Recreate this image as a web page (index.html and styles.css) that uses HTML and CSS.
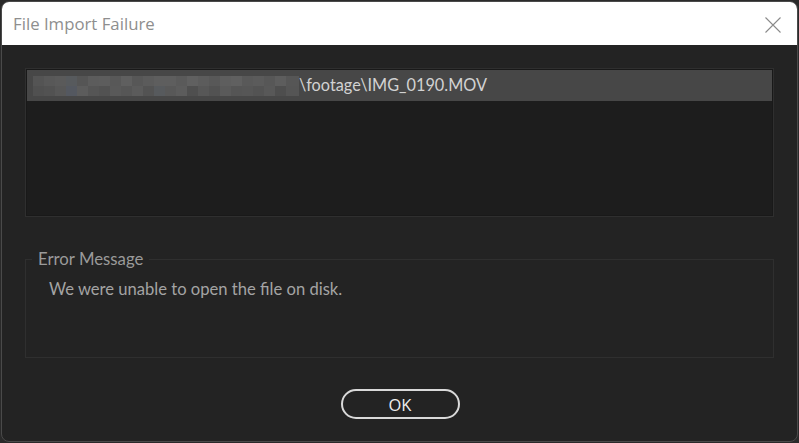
FILE: index.html
```html
<!DOCTYPE html>
<html lang="en">
<head>
<meta charset="utf-8">
<title>File Import Failure</title>
<link rel="stylesheet" href="styles.css">
</head>
<body>
<div class="window">
  <div class="titlebar">
    <span class="title">File Import Failure</span>
    <button class="close" aria-label="Close">
      <svg width="16" height="16" viewBox="0 0 16 16"><path d="M0.5 0.5 L15.5 15.5 M15.5 0.5 L0.5 15.5" stroke="#8a8a8a" stroke-width="1.1" fill="none"/></svg>
    </button>
  </div>
  <div class="content">
    <div class="list">
      <div class="row selected">
        <svg class="blur" width="266" height="20" viewBox="0 0 266 20" shape-rendering="crispEdges">
          <g>
            <rect x="0" y="0" width="11" height="10" fill="#545454"/>
            <rect x="11" y="0" width="11" height="10" fill="#585858"/>
            <rect x="22" y="0" width="11" height="10" fill="#5a5a5a"/>
            <rect x="33" y="0" width="11" height="10" fill="#575a5d"/>
            <rect x="44" y="0" width="11" height="10" fill="#555555"/>
            <rect x="55" y="0" width="11" height="10" fill="#5c5c5c"/>
            <rect x="66" y="0" width="11" height="10" fill="#5d5d5d"/>
            <rect x="77" y="0" width="11" height="10" fill="#585858"/>
            <rect x="88" y="0" width="11" height="10" fill="#5f5f5f"/>
            <rect x="99" y="0" width="11" height="10" fill="#575757"/>
            <rect x="110" y="0" width="11" height="10" fill="#5b5b5b"/>
            <rect x="121" y="0" width="11" height="10" fill="#5e5e5e"/>
            <rect x="132" y="0" width="11" height="10" fill="#5e5e5e"/>
            <rect x="143" y="0" width="11" height="10" fill="#5a5a5a"/>
            <rect x="154" y="0" width="11" height="10" fill="#606060"/>
            <rect x="165" y="0" width="11" height="10" fill="#5c5c5c"/>
            <rect x="176" y="0" width="11" height="10" fill="#585858"/>
            <rect x="187" y="0" width="11" height="10" fill="#5e5e5e"/>
            <rect x="198" y="0" width="11" height="10" fill="#606060"/>
            <rect x="209" y="0" width="11" height="10" fill="#595959"/>
            <rect x="220" y="0" width="11" height="10" fill="#5b5b5b"/>
            <rect x="231" y="0" width="11" height="10" fill="#575757"/>
            <rect x="242" y="0" width="11" height="10" fill="#5d5d5d"/>
            <rect x="253" y="0" width="13" height="10" fill="#565656"/>
            <rect x="0" y="10" width="11" height="10" fill="#505050"/>
            <rect x="11" y="10" width="11" height="10" fill="#525252"/>
            <rect x="22" y="10" width="11" height="10" fill="#575757"/>
            <rect x="33" y="10" width="11" height="10" fill="#545860"/>
            <rect x="44" y="10" width="11" height="10" fill="#5c5c5c"/>
            <rect x="55" y="10" width="11" height="10" fill="#555555"/>
            <rect x="66" y="10" width="11" height="10" fill="#525252"/>
            <rect x="77" y="10" width="11" height="10" fill="#595959"/>
            <rect x="88" y="10" width="11" height="10" fill="#565656"/>
            <rect x="99" y="10" width="11" height="10" fill="#5b5b5b"/>
            <rect x="110" y="10" width="11" height="10" fill="#535353"/>
            <rect x="121" y="10" width="11" height="10" fill="#575a5d"/>
            <rect x="132" y="10" width="11" height="10" fill="#585858"/>
            <rect x="143" y="10" width="11" height="10" fill="#5c5c5c"/>
            <rect x="154" y="10" width="11" height="10" fill="#4f4f4f"/>
            <rect x="165" y="10" width="11" height="10" fill="#575757"/>
            <rect x="176" y="10" width="11" height="10" fill="#525252"/>
            <rect x="187" y="10" width="11" height="10" fill="#5a5a5a"/>
            <rect x="198" y="10" width="11" height="10" fill="#555555"/>
            <rect x="209" y="10" width="11" height="10" fill="#565656"/>
            <rect x="220" y="10" width="11" height="10" fill="#535353"/>
            <rect x="231" y="10" width="11" height="10" fill="#585858"/>
            <rect x="242" y="10" width="11" height="10" fill="#4e4e4e"/>
            <rect x="253" y="10" width="13" height="10" fill="#555555"/>
          </g>
        </svg>
        <span class="path">\footage\IMG_0190.MOV</span>
      </div>
    </div>
    <fieldset class="group">
      <legend class="group-label">Error Message</legend>
      <p class="message">We were unable to open the file on disk.</p>
    </fieldset>
    <div class="actions">
      <button class="ok">OK</button>
    </div>
  </div>
</div>
</body>
</html>
```

FILE: styles.css
```css
html, body {
  margin: 0;
  padding: 0;
  background: #2a2a2a;
}

.window {
  margin: 1px;
  width: 795px;
  height: 439px;
  border: 1px solid #4a4a4a;
  border-radius: 8px;
  overflow: hidden;
  display: flex;
  flex-direction: column;
  background: #232323;
}

.titlebar {
  height: 43px;
  flex: none;
  background: #ffffff;
  display: flex;
  align-items: center;
  justify-content: space-between;
  padding: 0 16px 0 11px;
}

.title {
  font-family: "Open Sans", "Noto Sans", sans-serif;
  font-size: 16.8px;
  color: #8e8e8e;
  padding-bottom: 1px;
}

.close {
  border: 0;
  background: transparent;
  padding: 0;
  width: 16px;
  height: 16px;
  display: flex;
  margin-top: 2px;
}

.content {
  flex: 1;
  display: flex;
  flex-direction: column;
  padding: 23px 23px 0 23px;
  font-family: "Lato", "Noto Sans", sans-serif;
}

.list {
  height: 145px;
  border: 1px solid #2f2f2f;
  background: #1d1d1d;
  padding: 1px;
  box-shadow: inset 0 0 0 1px #191919;
}

.row {
  height: 31px;
  display: flex;
  align-items: center;
  padding-left: 6px;
}

.row.selected {
  background: #474747;
}

.blur {
  display: block;
  flex: none;
}

.path {
  color: #d2d2d2;
  font-size: 16.3px;
  padding-bottom: 2px;
}

.group {
  margin: 32px 0 0 0;
  padding: 0;
  height: 107px;
  border: 1px solid #2f2f2f;
  min-width: 0;
}

.group-label {
  margin-left: 6px;
  padding: 0 6px;
  color: #9a9a9a;
  font-size: 16.8px;
  line-height: 20px;
}

.message {
  margin: 10px 0 0 23px;
  color: #a4a4a4;
  font-size: 16.6px;
}

.actions {
  display: flex;
  justify-content: center;
  padding-top: 31px;
}

.ok {
  width: 119px;
  height: 30px;
  border: 2px solid #d9d9d9;
  border-radius: 15px;
  background: transparent;
  color: #ededed;
  font-family: "Open Sans", "Noto Sans", sans-serif;
  font-size: 16.5px;
  padding: 0;
  margin-left: 1px;
}
```
